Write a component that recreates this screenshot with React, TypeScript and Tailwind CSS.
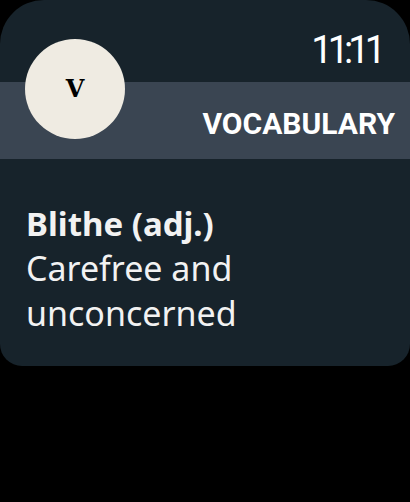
import React from 'react';

const App: React.FC = () => {
  return (
    <div className="w-[410px] h-[502px] bg-black overflow-hidden">
      <div className="relative h-[366px] w-full bg-[#17232b] rounded-t-[44px] rounded-b-[22px] overflow-hidden">
        <div className="h-[82px] flex items-start justify-end pr-[29px] pt-[31px]">
          <span className="font-['Roboto',sans-serif] text-[38px] leading-none tracking-[-5px] text-white">
            11:11
          </span>
        </div>
        <div className="h-[77px] bg-[#3a4552] flex items-end justify-end pr-[15px] pb-[20px]">
          <span className="font-['Roboto',sans-serif] font-bold text-[30px] leading-none text-white">
            VOCABULARY
          </span>
        </div>

        {/* avatar sits over both the top bar and the band */}
        <div className="absolute left-[25px] top-[39px] w-[100px] h-[100px] rounded-full bg-[#efebe2] flex items-center justify-center">
          <span className="font-['DejaVu_Serif',serif] font-bold text-[24px] leading-none text-black">V</span>
        </div>

        <div className="px-[26px] pt-[42px] font-['Noto_Sans',sans-serif] text-[#f2f2f2]">
          <div className="font-bold text-[33px] leading-[45px]">Blithe (adj.)</div>
          <div className="text-[34px] leading-[45px]">
            Carefree and
            <br />
            unconcerned
          </div>
        </div>
      </div>
    </div>
  );
};

export default App;
